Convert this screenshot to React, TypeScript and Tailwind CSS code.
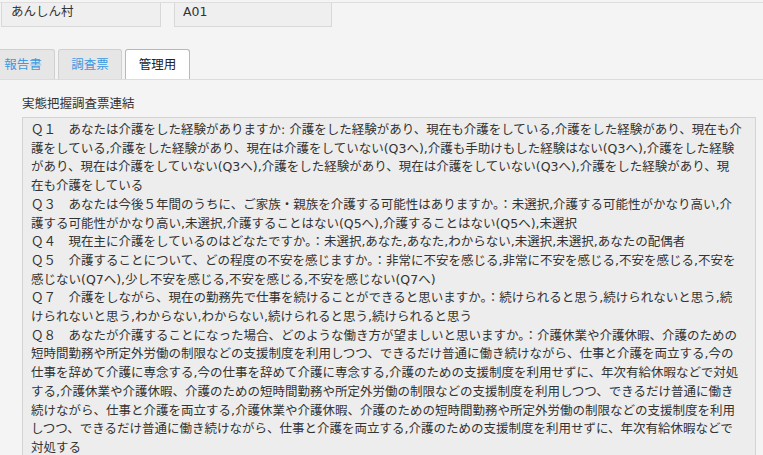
import React from "react";

const lines: string[] = [
  "Ｑ１　あなたは介護をした経験がありますか: 介護をした経験があり、現在も介護をしている,介護をした経験があり、現在も介",
  "護をしている,介護をした経験があり、現在は介護をしていない(Q3へ),介護も手助けもした経験はない(Q3へ),介護をした経験",
  "があり、現在は介護をしていない(Q3へ),介護をした経験があり、現在は介護をしていない(Q3へ),介護をした経験があり、現",
  "在も介護をしている",
  "Ｑ３　あなたは今後５年間のうちに、ご家族・親族を介護する可能性はありますか。：未選択,介護する可能性がかなり高い,介",
  "護する可能性がかなり高い,未選択,介護することはない(Q5へ),介護することはない(Q5へ),未選択",
  "Ｑ４　現在主に介護をしているのはどなたですか。：未選択,あなた,あなた,わからない,未選択,未選択,あなたの配偶者",
  "Ｑ５　介護することについて、どの程度の不安を感じますか。：非常に不安を感じる,非常に不安を感じる,不安を感じる,不安を",
  "感じない(Q7へ),少し不安を感じる,不安を感じる,不安を感じない(Q7へ)",
  "Ｑ７　介護をしながら、現在の勤務先で仕事を続けることができると思いますか。：続けられると思う,続けられないと思う,続",
  "けられないと思う,わからない,わからない,続けられると思う,続けられると思う",
  "Ｑ８　あなたが介護することになった場合、どのような働き方が望ましいと思いますか。：介護休業や介護休暇、介護のための",
  "短時間勤務や所定外労働の制限などの支援制度を利用しつつ、できるだけ普通に働き続けながら、仕事と介護を両立する,今の",
  "仕事を辞めて介護に専念する,今の仕事を辞めて介護に専念する,介護のための支援制度を利用せずに、年次有給休暇などで対処",
  "する,介護休業や介護休暇、介護のための短時間勤務や所定外労働の制限などの支援制度を利用しつつ、できるだけ普通に働き",
  "続けながら、仕事と介護を両立する,介護休業や介護休暇、介護のための短時間勤務や所定外労働の制限などの支援制度を利用",
  "しつつ、できるだけ普通に働き続けながら、仕事と介護を両立する,介護のための支援制度を利用せずに、年次有給休暇などで",
  "対処する",
];

const tabs = [
  { label: "報告書", active: false },
  { label: "調査票", active: false },
  { label: "管理用", active: true },
];

export default function App() {
  return (
    <div className="h-screen overflow-hidden bg-[#f4f4f4] pt-[2px] font-['DejaVu_Sans','Noto_Sans_CJK_JP',sans-serif] text-[12.5px] text-[#333]">
      {/* header fields (scrolled, top cut off) */}
      <div className="flex gap-[13px] border-t border-[#dedede] pl-[1px]">
        <div className="h-[24px] w-[160px] border-x border-b border-[#d8d8d8] bg-[#efefef] pl-[9px] leading-[18px]">
          あんしん村
        </div>
        <div className="h-[24px] w-[158px] border-x border-b border-[#d8d8d8] bg-[#efefef] pl-[8px] leading-[18px]">
          A01
        </div>
      </div>

      {/* tabs */}
      <div className="mt-[22px] flex gap-[3px] border-b border-[#dcdcdc] -ml-[9px]">
        {tabs.map((t) => (
          <div
            key={t.label}
            className={
              t.active
                ? "h-[30px] w-[65px] rounded-t-[3px] border border-b-0 border-[#b8b8b8] bg-white text-center leading-[29px] text-[#222]"
                : "h-[30px] w-[64px] rounded-t-[3px] border border-b-0 border-[#d0d0d0] bg-[#e6e6e6] text-center leading-[29px] text-[#3d9ae0]"
            }
          >
            {t.label}
          </div>
        ))}
      </div>

      {/* content */}
      <div className="pl-[22px] pr-[7px]">
        <div className="mt-[15px] leading-[18px]">実態把握調査票連結</div>
        <div className="mt-[4px] h-[400px] border border-[#d3d3d3] bg-[#ededed] pl-[8px] pt-[3px] leading-[18.7px]">
          {lines.map((l, i) => (
            <div key={i} className="whitespace-nowrap">
              {l}
            </div>
          ))}
        </div>
      </div>
    </div>
  );
}
